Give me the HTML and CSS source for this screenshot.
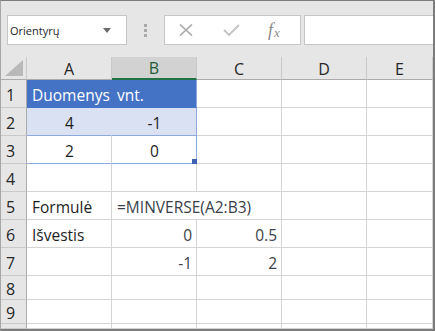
FILE: index.html
```html
<!DOCTYPE html>
<html>
<head>
    <meta charset="UTF-8">
    <title>MINVERSE</title>
    <link rel="stylesheet" href="styles.css">
</head>
<body>
    <div class="window">
        <!-- toolbar with name box and formula bar -->
        <div class="toolbar">
            <div class="name-box">
                <span>Orientyrų</span>
                <svg class="caret" width="8" height="5" viewBox="0 0 8 5"><path d="M0 0 H8 L4 5 Z" fill="#6b6b6b"/></svg>
            </div>
            <div class="grip"><i></i><i></i><i></i></div>
            <div class="func-box">
                <svg class="ico" width="14" height="12" viewBox="0 0 14 12"><path d="M1 0.5 L13 11.5 M13 0.5 L1 11.5" stroke="#a8a8a8" stroke-width="1.6" fill="none"/></svg>
                <svg class="ico" width="17" height="12" viewBox="0 0 17 12"><path d="M1 6 L6 11 L16 1" stroke="#c2c2c2" stroke-width="1.8" fill="none"/></svg>
                <span class="fx">f<sub>x</sub></span>
            </div>
            <div class="formula-bar"></div>
        </div>

        <div class="sheet">
            <div class="hd corner">
                <svg width="18" height="16" viewBox="0 0 18 16"><path d="M18 0 V16 H0 Z" fill="#b9b9b9"/></svg>
            </div>
            <div class="hd col">A</div>
            <div class="hd col sel">B</div>
            <div class="hd col">C</div>
            <div class="hd col">D</div>
            <div class="hd col">E</div>

            <div class="hd row">1</div>
            <div class="c th">Duomenys</div>
            <div class="c th tb-r">vnt.</div>
            <div class="c"></div><div class="c"></div><div class="c"></div>

            <div class="hd row">2</div>
            <div class="c tr2 mid">4</div>
            <div class="c tr2 tb-r mid">-1</div>
            <div class="c"></div><div class="c"></div><div class="c"></div>

            <div class="hd row">3</div>
            <div class="c tr3 mid">2</div>
            <div class="c tr3 tb-r mid">0<span class="handle"></span></div>
            <div class="c"></div><div class="c"></div><div class="c"></div>

            <div class="hd row">4</div>
            <div class="c"></div><div class="c"></div><div class="c"></div><div class="c"></div><div class="c"></div>

            <div class="hd row">5</div>
            <div class="c">Formulė</div>
            <div class="c overflow formula">=MINVERSE(A2:B3)</div>
            <div class="c"></div><div class="c"></div><div class="c"></div>

            <div class="hd row">6</div>
            <div class="c">Išvestis</div>
            <div class="c num">0</div>
            <div class="c num">0.5</div>
            <div class="c"></div><div class="c"></div>

            <div class="hd row">7</div>
            <div class="c"></div>
            <div class="c num">-1</div>
            <div class="c num">2</div>
            <div class="c"></div><div class="c"></div>

            <div class="hd row">8</div>
            <div class="c"></div><div class="c"></div><div class="c"></div><div class="c"></div><div class="c"></div>

            <div class="hd row">9</div>
            <div class="c"></div><div class="c"></div><div class="c"></div><div class="c"></div><div class="c"></div>

            <div class="hd row"></div>
            <div class="c"></div><div class="c"></div><div class="c"></div><div class="c"></div><div class="c"></div>
        </div>
    </div>
</body>
</html>
```

FILE: styles.css
```css
html, body {
    margin: 0;
    padding: 0;
    background: #ffffff;
}
.window {
    box-sizing: border-box;
    width: 435px;
    height: 331px;
    border-top: 1px solid #7c7c7c;
    border-right: 2px solid #7c7c7c;
    border-bottom: 2px solid #7c7c7c;
    border-left: 1px solid #a6a6a6;
    overflow: hidden;
    display: flex;
    flex-direction: column;
    font-family: "Open Sans", "Noto Sans", sans-serif;
    color: #1e1e1e;
}

/* toolbar */
.toolbar {
    height: 56px;
    flex: none;
    background: #e6e6e6;
    display: flex;
    align-items: flex-start;
    padding: 14px 0 0 6px;
    box-sizing: border-box;
}
.name-box {
    box-sizing: border-box;
    width: 120px;
    height: 30px;
    background: #fff;
    border: 1px solid #c6c6c6;
    display: flex;
    align-items: center;
    justify-content: space-between;
    padding: 0 15px 0 2px;
    font-size: 11px;
    color: #262626;
}
.grip {
    width: 37px;
    height: 30px;
    display: flex;
    flex-direction: column;
    align-items: center;
    justify-content: center;
    gap: 2px;
}
.grip i {
    display: block;
    width: 3px;
    height: 3px;
    background: #a9a9a9;
}
.func-box {
    box-sizing: border-box;
    width: 137px;
    height: 30px;
    background: #fff;
    border: 1px solid #c6c6c6;
    display: flex;
    align-items: center;
    padding-left: 14px;
    gap: 30px;
}
.fx {
    font-family: "Liberation Serif", "DejaVu Serif", serif;
    font-style: italic;
    font-size: 18px;
    color: #8a8a8a;
    margin-left: -2px;
}
.fx sub {
    font-size: 13px;
    vertical-align: -1px;
    margin-left: 1px;
}
.formula-bar {
    flex: 1;
    height: 30px;
    box-sizing: border-box;
    background: #fff;
    border: 1px solid #c6c6c6;
    border-right: none;
    margin-left: 3px;
}

/* sheet grid */
.sheet {
    flex: 1;
    display: grid;
    grid-template-columns: 26px repeat(4, 85px) 1fr;
    grid-template-rows: 23px repeat(7, 28px) 24px 24px 1fr;
    font-size: 15.5px;
}
.hd {
    background: #e6e6e6;
    box-sizing: border-box;
    display: flex;
    align-items: center;
    color: #262626;
}
.corner {
    border-right: 1px solid #c9c9c9;
    border-bottom: 1px solid #ababab;
    justify-content: flex-end;
    align-items: flex-end;
    padding: 0 3px 3px 0;
}
.corner svg {
    display: block;
}
.col {
    justify-content: center;
    border-right: 1px solid #c9c9c9;
    border-bottom: 1px solid #ababab;
    font-size: 16px;
    padding-top: 1px;
}
.col.sel {
    background: #d2d2d2;
    color: #1d5c38;
    border-bottom: 2px solid #217346;
}
.row {
    border-right: 1px solid #ababab;
    border-bottom: 1px solid #c9c9c9;
    padding-left: 5px;
    font-size: 16px;
    padding-top: 2px;
}
.c {
    box-sizing: border-box;
    border-right: 1px solid #d4d4d4;
    border-bottom: 1px solid #d4d4d4;
    display: flex;
    align-items: center;
    padding: 2px 4px 0 5px;
    white-space: nowrap;
    position: relative;
}
.c.overflow {
    overflow: visible;
    border-right: none;
    z-index: 1;
}
.th {
    background: #4472c4;
    color: #ffffff;
    border-right-color: #4472c4;
    border-bottom-color: #4472c4;
}
.tr2 {
    background: #d9e1f2;
    border-right-color: #d9e1f2;
    border-bottom-color: #8ea9db;
}
.tr3 {
    border-bottom-color: #8ea9db;
}
.tb-r {
    border-right-color: #8ea9db;
}
.mid {
    justify-content: center;
}
.num {
    justify-content: flex-end;
    color: #3a3f4a;
}
.formula {
    color: #3a3f4a;
}
.handle {
    position: absolute;
    right: -1px;
    bottom: -1px;
    width: 5px;
    height: 5px;
    background: #3f5fb3;
}
```
